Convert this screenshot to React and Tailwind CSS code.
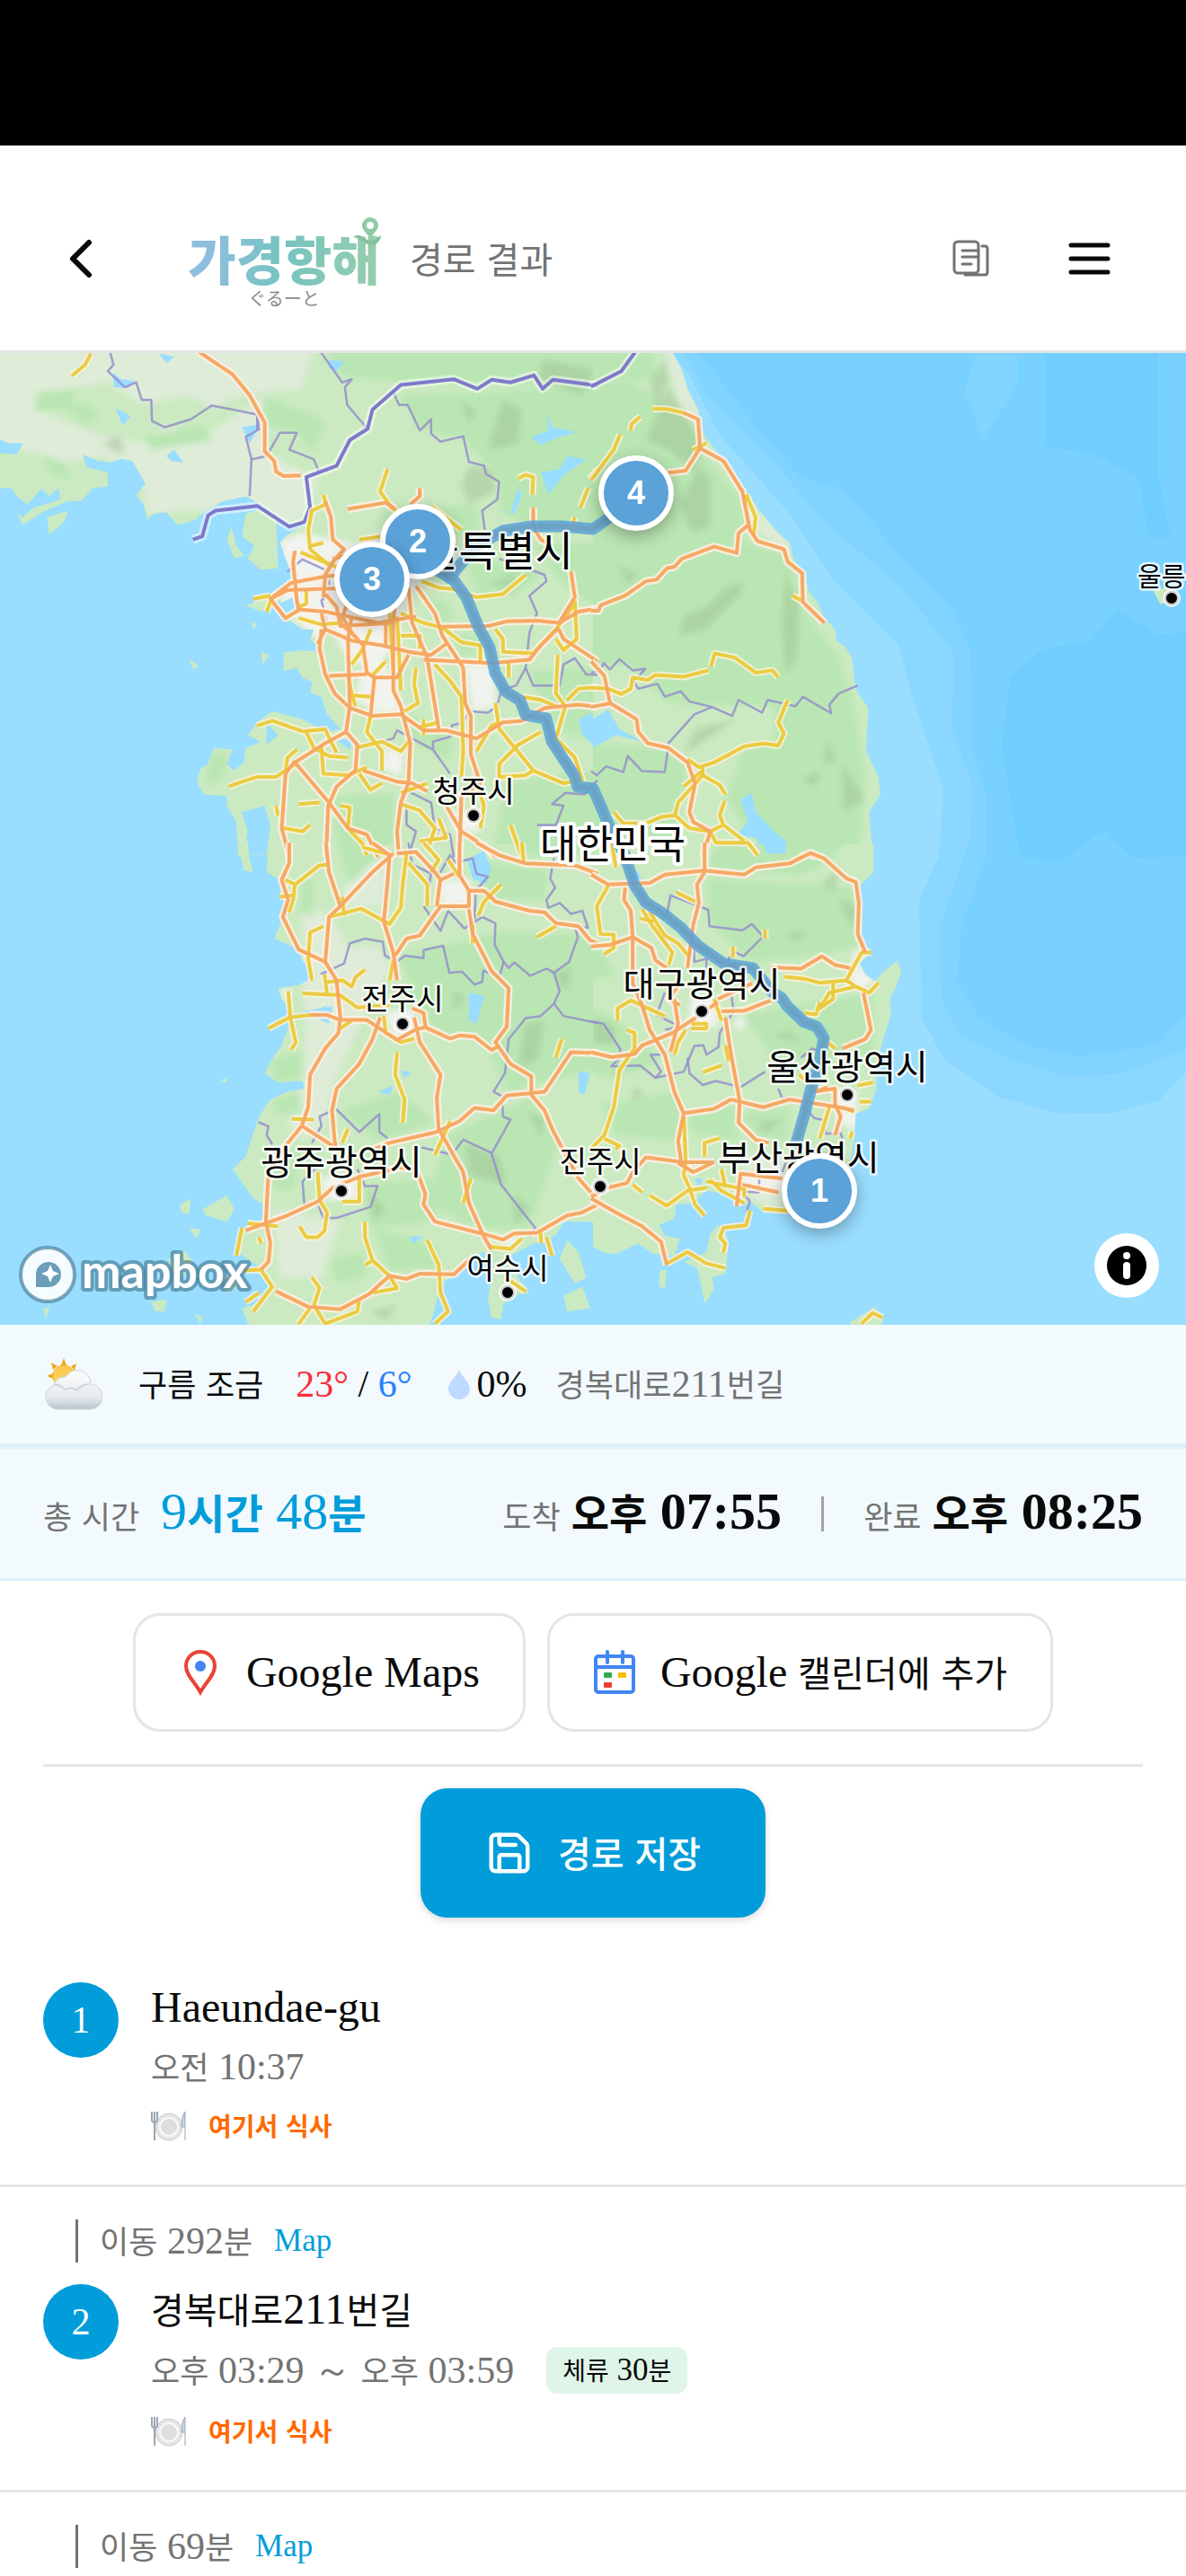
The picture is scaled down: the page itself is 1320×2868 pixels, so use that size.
import { clsx } from 'clsx';

const HANGUL = /([\u1100-\u11ff\uac00-\ud7a3]+)/;

const TEXT_SIZES = {
    sm: { hangul: 'text-[28px]', latin: 'text-[35px]' },
    md: { hangul: 'text-[35px]', latin: 'text-[42px]' },
    lg: { hangul: 'text-[40px]', latin: 'text-[48px]' },
    xl: { hangul: 'text-[46px]', latin: 'text-[58px]' }
};

// Hangul and latin runs use different faces, so each run gets its own optical size
function Text({ size = 'md', className, latinClassName, children }) {
    return (
        <span className={clsx("block whitespace-pre font-['Liberation_Serif',serif]", TEXT_SIZES[size].latin, className)}>
            {children.split(HANGUL).filter(Boolean).map((run, i) => (
                HANGUL.test(run)
                    ? <span key={i} className={clsx("font-['Noto_Sans_CJK_KR',sans-serif] leading-none", TEXT_SIZES[size].hangul)}>{run}</span>
                    : <span key={i} className={latinClassName}>{run}</span>
            ))}
        </span>
    );
}

// Map geometry is split in four quadrants, each on its own 1568 x 1568 grid
const QUADRANTS = [
    {
        id: 'nw',
        transform: 'translate(0 -3) scale(0.4209 0.3571)',
        land: [
            '-5,-5 -5,430 30,430 45,455 72,480 110,432 130,455 155,430 160,465 135,475 90,490 60,520 45,510 60,545 120,500 180,470 215,470 245,430 285,425 285,380 230,365 218,325 260,345 290,350 320,338 350,345 385,415 360,450 380,480 390,530 405,510 440,505 470,545 515,530 545,500 590,470 650,455 690,480 730,520 760,540 805,545 760,575 740,600 765,680 785,700 700,775 650,795 690,815 740,780 755,835 800,870 830,870 820,900 850,940 800,935 750,942 750,1000 785,990 800,1020 825,1035 820,1068 850,1080 865,1135 900,1180 860,1190 800,1150 720,1125 680,1160 655,1200 690,1220 650,1240 645,1285 620,1310 600,1290 615,1245 565,1240 550,1290 530,1305 520,1345 540,1385 600,1390 600,1420 625,1470 630,1575 1580,1580 1580,-5',
            '650,510 690,495 730,520 735,680 690,685 655,650 672,610 640,580',
            '612,550 625,610 645,640 620,650 600,590',
            '500,960 525,985 510,995', '690,940 712,950 695,980', '665,845 680,855 670,868', '125,520 180,500 170,535 130,575'
        ],
        urban: [
            '745,590 800,570 880,590 940,600 1010,560 1090,540 1200,600 1210,650 1130,690 1090,750 1060,830 1060,930 1010,960 1050,1060 1060,1130 1000,1130 940,1090 960,980 900,930 880,850 840,900 760,820 740,770 770,700 740,650',
            '1020,1240 1070,1250 1060,1330 1010,1300', '1190,1440 1270,1440 1270,1500 1200,1500', '1230,980 1310,980 1310,1110 1250,1130'
        ],
        pale: [
            '-60,-60 840,-60 800,120 640,140 560,180 500,140 380,170 280,100 150,130 90,180 250,260 390,290 430,240 560,250 700,140 700,320 840,400 820,490 760,550 690,480 540,500 390,510 380,430 280,330 180,350 -60,270'
        ],
        forest: [
            '840,-60 1660,-60 1660,140 1430,110 1260,110 1060,100 900,80', '1060,140 1660,110 1660,530 1420,560 1320,500 1320,400 1220,270 1110,250',
            '100,130 200,120 190,180 90,190', '170,180 225,160 265,210 225,230', '380,270 540,230 560,280 400,310', '700,140 860,220 830,320 780,250 690,230',
            '110,330 170,350 190,410 130,380', '1230,640 1440,690 1360,770 1260,760', '1180,880 1300,900 1230,960', '1400,600 1660,600 1660,780 1560,790 1500,740', '1400,1000 1660,980 1660,1220 1500,1200 1430,1100',
            '880,1390 1040,1380 1050,1640 900,1640', '1340,1350 1450,1330 1660,1300 1660,1640 1290,1640', '1070,1130 1200,1190 1190,1280 1090,1220', '560,1250 600,1260 590,1340 540,1360', '1010,500 1260,480 1270,580 1050,580', '1120,760 1180,780 1200,840 1160,850'
        ],
        shade: ['270,290 310,265 330,300 320,330', '1240,360 1300,370 1310,440 1240,480 1220,420', '1330,150 1380,190 1370,290 1290,310', '1220,160 1260,190 1240,230', '1290,730 1380,690 1350,740', '1440,30 1570,60 1540,140 1420,90'],
        water: [
            '-5,275 20,290 60,290 45,325 -5,320', '300,70 320,90 355,95 340,118 300,115', '420,10 462,20 440,40', '870,30 910,35 890,65 868,55',
            '305,180 345,205 325,235', '440,330 460,310 485,350 455,345', '640,240 690,230 660,290', '1405,270 1450,250 1445,190 1460,240 1525,255 1480,270 1430,295', '1430,380 1480,370 1500,330 1550,340 1490,390 1450,450', '1290,490 1350,505 1370,430 1380,450 1360,510',
            '890,1215 935,1210 925,1245', '1530,1150 1568,1130 1568,1230 1540,1200', '640,1440 700,1420 715,1480 705,1575 645,1575 655,1500', '740,790 775,770 790,820 760,830', '705,1160 735,1200 705,1230'
        ],
        orange: [
            '520,0 615,75 660,140 700,225 700,315 725,345 730,378 750,392 795,390', '920,495 1020,475 1045,495', '1110,430 1110,455 1085,480', '860,470 875,520 880,590 910,620 880,660 860,700 855,770', '780,625 775,660 785,780 790,810 755,835 715,775 770,725 860,705 900,700',
            '715,775 760,748 900,742 1000,700 1060,640', '790,808 860,815 920,830 1000,850 1100,830', '860,870 930,905 1010,920 1080,940 1140,950 1180,915', '850,870 845,930 860,1010 885,1070 925,1115 985,1140 1060,1135 1120,1185 1180,1185 1260,1210 1330,1160 1380,1155 1440,1115 1530,1105 1580,1112',
            '840,915 860,870 850,820', '905,830 930,880 960,920 970,1005 990,1020 980,1140', '930,830 920,900 925,1110 915,1190 860,1225 780,1285 870,1410 920,1490 970,1510 1000,1580', '780,1280 755,1320 745,1490 765,1580', '915,1190 945,1230 940,1310 890,1360 868,1420 862,1580',
            '870,1015 925,1012 970,1010', '990,1020 1050,1020 1080,950', '1040,830 1040,1060 1060,1110 1085,1225 1080,1350 1060,1410 1050,1500 1055,1580', '1080,740 1090,850 1130,960 1160,1180', '1100,735 1150,820 1170,890 1225,990 1230,1100 1245,1140 1245,1260 1270,1350 1220,1390 1215,1580',
            '1160,862 1290,860 1340,845 1420,843 1478,850 1520,770 1510,690', '1478,850 1530,815 1580,805', '1478,865 1430,920 1400,965 1300,975 1120,965', '1478,870 1490,900 1580,970', '1410,490 1410,550 1430,590 1460,610', '960,1310 1050,1345 1090,1350 1130,1375', '1180,1420 1220,1500 1280,1545 1310,1580', '880,650 915,640 930,750 900,850 945,900', '860,760 890,800 900,860 1040,850 1045,780', '1020,850 1020,920'
        ],
        yellow: [
            '240,10 225,45 190,80', '1025,370 1005,440 1035,490 1060,510', '855,450 862,480 825,500 815,560 820,620 870,670', '795,630 900,680', '820,610 855,600', '950,590 1010,580', '1140,485 1220,560', '1370,400 1390,388 1410,395 1408,450', '1580,370 1560,400', '1555,430 1535,490', '1520,520 1510,560', '670,775 715,765', '705,815 720,770', '810,745 810,790 790,800', '790,835 850,855 900,850',
            '1115,720 1160,740 1200,745 1260,770 1330,760 1390,700', '1060,820 1120,850 1170,865 1220,910 1270,920 1270,975', '1310,870 1330,900 1330,940 1410,945 1470,870 1520,790', '1520,780 1525,900 1490,935 1470,900', '1060,890 1110,890 1110,930', '980,870 960,930 930,980', '1020,970 980,1020', '1100,990 1095,1040 1105,1100 1070,1125', '1150,980 1190,1030 1220,1080 1225,1250 1220,1330',
            '920,1010 930,1070 940,1110', '925,1075 980,1080', '680,1170 720,1155 800,1188 860,1182 890,1255', '810,1190 830,1240 870,1265 920,1270', '850,1230 855,1320 920,1325 970,1300', '980,1140 970,1190 1010,1250 1010,1310', '940,1240 1010,1220 1060,1250 1080,1220', '605,1360 640,1345 680,1330 730,1330 780,1290', '755,1310 760,1270 785,1245', '950,1320 980,1370 1010,1350', '1345,975 1345,1020', '1475,950 1470,1070 1495,1110 1470,1210 1520,1270 1540,1340 1490,1350 1410,1310 1320,1180 1310,1100', '1380,1080 1430,1090 1470,1110', '1500,1090 1530,1055 1580,1050',
            '1430,1190 1370,1230 1320,1290 1320,1330 1390,1325 1410,1310', '1260,1250 1300,1170 1320,1160', '1120,1150 1120,1200', '1110,1175 1160,1160', '1260,1350 1280,1420 1270,1490', '750,1490 800,1500 820,1480', '790,1415 845,1410', '730,1420 735,1450', '1060,1415 1110,1435 1150,1490 1130,1560', '900,1420 925,1425 920,1490 960,1540 970,1575', '1350,1480 1380,1580', '1060,1380 1130,1350', '1160,1460 1180,1520 1110,1530', '1050,830 1060,1060', '1030,820 1040,1000'
        ],
        border: ['290,0 300,45 285,65 330,115 360,100 375,155 400,155 402,220 435,240 505,215 560,172 680,200 680,250 650,270 665,340 660,455', '665,340 705,330 740,257 785,257 765,310 830,340 845,385', '680,200 685,250', '845,0 905,100 930,90 912,115 918,170 972,245', '1040,130 1055,170 1078,170 1110,250 1140,215 1140,260 1165,285 1225,268 1240,348 1280,360 1285,385 1320,410 1315,465 1275,500 1282,560', '1320,650 1440,700 1445,720 1400,765 1420,820 1400,880 1390,990 1410,1045 1480,1045 1490,980 1520,960 1550,1010 1580,1012', '1390,990 1365,1045 1325,1060 1315,1110 1290,1130 1240,1125 1225,1160 1195,1170 1190,1205 1145,1220 1145,1245 1190,1320', '935,1245 1040,1210 1050,1185 1145,1245', '760,690 800,652 870,690 870,760 850,780 865,850', '1060,1390 1080,1375 1140,1410 1150,1490 1190,1510 1200,1580', '1060,1390 1075,1420 1075,1480 1100,1500 1080,1580', '1580,1340 1545,1385 1495,1380 1460,1415 1490,1420 1470,1480 1420,1480'],
        frontier: ['510,590 535,580 550,515 570,500 680,485 765,550 805,535 820,490 810,395 890,360 925,280 972,245 985,185 1060,108 1200,90 1262,120 1300,92 1350,100 1412,78 1435,120 1462,92 1580,110']
    },
    {
        id: 'ne',
        transform: 'translate(660 -3) scale(0.4209 0.3571)',
        land: ['0,-5 205,-5 235,60 250,120 280,190 285,250 330,320 365,380 400,430 440,500 490,570 520,600 530,650 560,700 570,750 595,790 610,830 640,870 645,905 670,930 685,960 695,1060 728,1115 722,1250 755,1330 760,1385 730,1440 740,1580 0,1580', '1480,745 1520,740 1530,780 1500,792'],
        urban: [],
        pale: ['180,-60 205,-60 280,190 260,220 220,150', '440,500 525,610 520,640 480,600 430,560'],
        forest: ['-80,110 100,100 240,200 290,320 400,480 400,600 520,640 550,800 650,960 690,1100 720,1330 700,1640 500,1640 350,1400 400,1240 480,1220 480,1110 200,1100 90,980 -80,980', '-80,1220 180,1240 250,1300 200,1640 -80,1640', '-80,-60 150,-60 170,90 -80,110'],
        shade: ['200,110 290,280 270,380 200,310 140,280', '150,100 190,30 200,90 170,190', '280,360 310,400 310,550 260,570 230,480', '510,690 545,800 540,960 510,1010 500,860', '240,830 300,800 350,740 400,720 390,760 300,870 230,890', '270,1180 380,1150 330,1190 240,1260', '550,1340 600,1310 590,1360', '660,1290 720,1400 660,1440', '620,1200 640,1280 610,1290', '70,670 120,700 90,730'],
        water: ['0,1150 40,1120 70,1180 130,1220 60,1200 0,1240', '390,1400 420,1380 430,1440 480,1500 510,1530 510,1575 450,1570 430,1520 380,1510 410,1470'],
        orange: ['240,195 278,215 283,305 345,345 395,440 415,560 435,595 505,620 515,660 553,695 555,785 612,850', '283,305 245,375 195,382', '-5,812 15,812 20,795 85,765 140,720 168,715 195,680 215,675 235,650 320,612 380,632 385,570 410,545', '-5,970 30,1015 45,1100 115,1150 120,1190 145,1225 200,1240 250,1285 270,1350 255,1440 265,1470 310,1500 290,1580', '-5,1112 50,1100', '550,1580 570,1570 590,1580'],
        yellow: ['158,183 195,183 240,195', '100,250 102,230 125,207', '72,262 55,310 -5,405', '265,310 300,290', '405,450 430,520 425,575', '400,480 410,450', '528,765 550,780', '-5,1052 40,1055 75,1072 100,1055 105,1020 145,1028 165,1012 240,1018 305,998', '312,985 322,945 375,958 430,1005 475,998 490,1020', '515,1090 490,1160 505,1195 490,1232 450,1226 400,1235 320,1285 280,1300 250,1275', '290,1300 290,1325 335,1355 350,1385', '290,1325 225,1410 217,1450 180,1455 140,1475 80,1475 55,1440', '217,1450 255,1490 310,1500 325,1535 410,1535 435,1570', '348,1405 335,1450 345,1480 400,1530', '345,1480 310,1500', '240,1360 290,1310'],
        border: ['-5,1005 18,1000 28,975 45,995 70,963 105,998 138,993 108,1035 120,1055 170,1040 190,1080 232,1063 255,1095 315,1112 368,1140 385,1090 447,1130 462,1090 535,1110 555,1080 630,1132 625,1105 650,1070 700,1045', '315,1112 268,1135 200,1225 190,1315 130,1312 92,1265 80,1315 35,1297 10,1325 -5,1312'],
        frontier: ['-5,113 75,65 118,-5']
    },
    {
        id: 'sw',
        transform: 'translate(0 547) scale(0.4209 0.3444)',
        land: [
            '710,0 705,90 745,120 740,165 765,185 750,230 725,305 755,320 790,340 800,375 830,430 790,455 735,465 745,500 770,540 760,600 745,650 720,695 700,740 735,770 800,765 805,790 760,800 715,825 685,880 665,950 650,1010 615,1050 650,1110 670,1145 700,1165 695,1225 640,1240 630,1320 690,1370 720,1440 690,1480 640,1500 665,1580 1130,1580 1150,1500 1165,1420 1200,1395 1240,1345 1280,1315 1300,1400 1290,1470 1300,1530 1325,1535 1330,1490 1345,1460 1400,1450 1370,1400 1350,1330 1420,1285 1470,1265 1490,1220 1580,1220 1580,0',
            '628,-10 655,-10 660,50 670,90 645,85', '475,1165 505,1145 500,1195 480,1190', '535,1180 600,1135 620,1180 600,1220 545,1200', '500,1240 530,1245 520,1275', '445,1340 490,1315 510,1350 480,1400 450,1380', '400,1480 440,1470 435,1510 410,1510', '515,1520 535,1525 530,1550', '585,765 600,755 598,770', '1500,1280 1530,1320 1550,1400 1520,1420 1480,1340', '1490,1460 1540,1430 1560,1500 1500,1510', '115,1500 132,1498 120,1535', '590,1400 625,1380 630,1430 600,1450'
        ],
        urban: ['1160,120 1240,110 1250,190 1170,200', '1020,540 1090,530 1110,600 1040,630', '850,1080 940,1060 950,1150 860,1150', '740,465 770,465 760,520', '1300,1270 1370,1270 1360,1310'],
        pale: ['800,180 880,240 920,330 1000,330 1030,400 960,560 880,780 860,900 800,960 760,900 800,780 810,560 800,440', '930,20 1030,40 1010,200 900,200', '720,1180 900,1220 850,1400 740,1400'],
        forest: ['800,110 830,120 830,230 790,220', '880,-60 1020,-60 1010,30 920,130', '1290,-60 1660,-60 1660,30 1400,40', '1060,360 1330,280 1660,300 1660,700 1340,800 1280,640 1180,620 1100,540', '1270,60 1450,80 1440,180 1290,180', '900,860 1060,800 1150,900 1000,960', '1180,940 1400,820 1480,960 1400,1240 1260,1240 1130,1160', '960,1100 1140,1080 1160,1220 980,1240', '990,1240 1160,1300 1160,1370 1030,1380', '710,700 800,670 800,760 730,765', '720,830 790,800 800,870 730,870', '870,1340 960,1320 970,1400 890,1420', '700,1010 790,990 780,1110 720,1120'],
        shade: ['1390,580 1440,570 1420,700 1370,720', '1230,970 1320,1010 1340,1100 1240,1070', '1460,420 1510,400 1500,480', '1400,870 1440,880 1430,950', '970,1120 1020,1180 990,1220', '980,1510 1050,1490 1020,1540', '1200,470 1230,500 1200,540', '1360,1130 1400,1180 1360,1230'],
        water: ['1235,50 1280,20 1300,80 1285,130 1250,110', '1240,480 1280,490 1260,580 1240,570', '1000,800 1040,780 1030,810', '1060,730 1090,740 1070,755', '1530,735 1560,740 1545,810 1530,800', '1080,1270 1120,1265 1095,1290', '870,520 820,540 770,550 775,570 830,560', '800,540 880,525 870,580'],
        orange: [
            '765,-5 765,60 745,115 762,180 748,235 790,340 860,380 890,440 900,560 895,610 860,660 820,745 815,850 798,910 755,975 710,1060 703,1220 715,1290 710,1350 690,1375', '862,-5 870,90 900,200 870,235 860,380', '1040,30 985,90 900,200', '985,-5 1030,35 1025,120 1015,250 1040,350 1050,440', '1050,30 1100,25 1150,90 1165,115 1200,95', '1215,-5 1215,100 1240,150 1240,200 1165,200 1130,260 1110,295 1075,305 1045,360', '1165,110 1155,200', '1240,150 1280,150 1310,185 1400,215 1440,220 1470,255 1530,265 1560,310 1580,320', '1240,210 1250,290 1300,410 1345,465 1340,590 1310,640 1350,710 1405,750 1405,810 1440,860 1460,920 1490,990 1530,1080 1580,1150', '820,552 865,552 900,568 970,568 1050,632 1100,598 1125,592 1190,628 1215,618 1255,622 1300,665 1315,655', '1005,560 985,630 950,710 890,790 878,860 885,960 890,990', '1090,530 1120,545 1125,590', '1095,560 1110,640 1165,745 1155,820 1160,920 1225,1060 1240,1160 1280,1270', '1580,675 1510,672 1440,800 1340,812 1305,860 1255,852 1215,895 1155,930 1030,965 990,985', '798,910 880,975', '650,1248 760,1200 840,1155 880,1110 950,1075 1060,1045 1100,1050 1125,1130 1120,1165 1150,1220 1280,1260 1330,1278 1360,1258 1420,1256 1500,1200 1540,1190 1580,1165', '730,1445 815,1495 900,1503 975,1455 1030,1395 1075,1405 1110,1388 1200,1390 1240,1345', '1260,-5 1320,35 1390,62 1520,68 1580,95', '1280,1270 1300,1310'
        ],
        yellow: ['870,65 845,68 780,130 755,115', '780,130 775,180 765,220', '740,170 775,165', '870,235 955,208 1030,258 1060,205 1065,130 1075,30', '905,170 910,230', '855,265 820,285 815,370 825,440', '965,405 940,430 930,460 905,440 865,445', '858,420 865,485', '800,482 900,488 945,528 1030,520', '710,595 765,560 820,552', '762,475 768,560 782,640 770,665', '1030,440 1040,375', '1015,555 1020,610 1060,640 1095,628', '1050,672 1045,745 1070,825 1065,900', '895,600 930,570', '772,888 830,890', '920,920 905,965', '1190,895 1150,1005', '1245,1080 1225,1160', '840,1060 845,1150 865,1190 858,1250 840,1270 810,1270 792,1235', '950,1080 950,1155 905,1155', '655,1225 735,1235', '625,1330 640,1240', '690,1290 685,1270', '690,1375 720,1430 670,1510', '690,1375 640,1378', '685,1450 650,1480', '825,1400 845,1435 830,1490 860,1550 945,1510 950,1470', '820,1500 790,1550', '965,1220 965,1270 985,1345 1030,1395 1050,1435 985,1450', '985,1345 965,1360', '1130,1280 1160,1360 1165,1450 1185,1510 1150,1550', '1290,1300 1350,1308 1380,1275', '1335,1400 1390,1445', '1430,1255 1430,1290', '1445,1270 1460,1330', '1485,630 1470,690', '1420,300 1470,265', '1380,-5 1385,55', '1325,130 1280,185 1265,230', '1080,60 1130,130 1130,200', '960,10 1035,35', '1120,-5 1160,50 1140,90', '1185,50 1215,105', '1250,260 1250,320'],
        border: ['848,420 910,385 925,320 965,305 1012,315 1018,360 1050,380 1070,360 1120,368 1120,342 1172,328 1188,415 1222,412 1255,453 1275,445 1278,408 1320,430 1332,380', '1332,380 1345,400 1360,382 1402,425 1445,402 1465,415 1505,380 1528,300 1520,265 1555,270 1540,215 1510,225 1480,190 1450,205 1445,180 1468,140 1455,110 1465,45', '1465,415 1480,475 1465,515 1430,555 1390,562 1345,630 1335,740 1305,800 1328,815 1330,880 1350,890 1300,1000 1325,1100 1415,1240 1400,1270', '1465,515 1490,555 1580,578', '1275,235 1310,255 1308,325 1332,380', '1120,200 1165,280 1185,215 1228,272 1275,235', '1080,-5 1090,65 1140,95 1125,200', '1140,95 1165,90 1190,35 1205,60 1250,45 1260,95 1290,105 1258,150 1255,245', '683,898 710,912 705,940 720,970', '825,965 850,910 845,880 888,855 950,930 1003,872 1003,930 1025,950', '1115,980 1195,1003 1225,955 1300,998', '840,1040 800,1090 805,1165 840,1160 855,1208 890,1208 980,1172 998,1105 965,1105 945,1050'],
        frontier: []
    },
    {
        id: 'se',
        transform: 'translate(660 547) scale(0.4209 0.3444)',
        land: ['0,0 742,0 742,90 700,140 712,230 705,330 735,350 705,385 720,420 745,442 770,410 805,376 815,410 805,450 785,500 788,550 765,640 750,720 750,790 730,855 695,870 690,960 680,1020 640,1080 590,1150 520,1195 450,1190 420,1160 390,1165 350,1130 300,1120 260,1160 220,1165 215,1210 175,1230 190,1265 230,1275 215,1330 160,1325 120,1290 60,1325 30,1320 0,1300', '330,1230 355,1265 355,1330 350,1390 315,1400 320,1440 295,1485 285,1420 275,1370 240,1350 300,1320 310,1260', '175,1380 195,1375 190,1435 175,1430', '680,1545 745,1495 768,1530 760,1580 685,1580'],
        urban: ['690,340 730,350 700,390 745,440 700,480 680,430', '380,560 400,560 400,600 370,590', '390,1070 500,1060 510,1110 400,1120', '640,790 700,800 700,930 650,900', '260,490 330,490 330,590 250,590'],
        pale: ['380,1000 520,1000 500,1180 420,1150'],
        forest: ['-80,-60 60,-60 60,30 -80,30', '-80,300 10,320 60,420 -80,470', '300,110 690,140 700,330 600,360 420,380 310,260', '400,550 740,480 740,680 480,700', '20,840 230,800 230,960 60,940', '390,870 520,850 510,960 430,940', '-80,500 60,560 180,700 60,760 -80,720', '250,880 380,840 380,960 260,930', '350,-60 700,-60 620,60 550,100 300,80'],
        shade: ['520,280 570,290 530,320', '650,180 700,200 690,280', '600,130 650,80 640,150', '0,560 60,590 50,650 0,640', '440,900 500,890 450,940', '100,790 140,800 110,830', '480,620 520,600 540,640'],
        water: ['450,-5 510,-5 510,30 460,30', '90,80 120,90 130,120 100,110', '270,1080 290,1080 280,1120'],
        orange: ['-5,98 40,130 150,125 190,98 295,85 400,98 430,75 520,62 575,28 610,45 670,110 695,122 703,190 700,290 720,350', '295,-5 295,90 275,130 280,190 265,260 250,400', '85,140 82,180 100,215 105,300 105,450 130,520 150,600 190,680 215,800 240,870 225,960 235,1040', '-5,330 45,325 105,300 155,335 165,375 195,400', '-5,672 50,688 110,678 130,650 210,610 260,570 330,510', '340,540 400,538 470,505', '350,560 365,680 388,830 385,900 430,955 465,965', '470,398 550,402 605,362 640,390 680,400', '715,480 735,600 720,630 660,660', '235,870 320,855 365,825 450,850 520,825 650,850 690,860', '580,800 640,790 640,840 655,880 640,940', '215,500 225,580 205,670', '-5,1140 40,1110 90,1095 105,1060 140,1012 240,1028 320,1028', '-5,1145 60,1190 130,1235 180,1285 195,1360', '380,1170 390,1065 500,1080', '395,1100 490,1125', '225,1030 265,1060 320,1028', '230,450 200,500 230,520', '330,500 420,450', '590,800 620,785'],
        yellow: ['40,135 10,200 20,290 55,292 55,335 30,355', '130,210 155,260 210,350 200,390', '150,220 190,295 225,320 255,365', '125,240 160,250', '220,155 270,185', '455,275 455,305', '370,330 370,365', '735,350 710,350 670,440 695,460 730,480 755,448', '505,428 560,435 600,448 670,440', '635,440 635,500 600,530 625,480 695,460', '600,510 590,550 560,545', '65,570 65,530 100,505 190,555', '90,600 110,610 110,660 70,730 55,850 30,940 -5,985', '245,600 225,640 215,680', '350,650 358,700', '290,737 340,715', '335,950 295,965 295,1010', '240,880 245,1020 240,1070 255,1110 270,1165 295,1200', '30,952 70,975 60,985', '300,1090 400,1115 400,1140', '310,1085 340,1120 400,1160', '340,1050 350,1110', '150,1135 195,1168 250,1120 300,1110', '105,1100 130,1125', '450,1178 515,1185', '415,1185 405,1232 345,1240 335,1270 350,1290 345,1320', '195,1355 250,1318 300,1355 350,1370', '260,580 300,580 300,595 260,595', '320,500 340,570', '600,950 625,850', '660,850 690,865', '700,780 740,770', '705,832 735,832', '685,930 680,950', '710,1550 740,1515 765,1530', '410,-5 435,35', '50,-5 60,75', '620,640 640,660', '545,745 600,800'],
        border: ['195,230 205,165 305,212 308,265 395,278 420,258 450,298 398,362 370,345 355,380', '265,280 268,380 300,370 300,420', '-5,572 28,580 72,662 72,690 48,718 125,715 165,755 180,735 152,680 190,680 170,635 222,585 168,552 190,480', '190,600 225,590', '365,480 372,540 335,610 332,655 300,680 292,650 268,652 240,735 165,755', '250,690 255,740 290,778 325,765 390,785 455,735', '490,790 500,820 540,822 585,885 612,892 615,935 655,935 660,950', '510,1030 500,1060', '470,1078 440,1080 438,1125 395,1122 415,1155 405,1190', '550,690 580,660 620,680'],
        frontier: []
    }
];

const ROUTES = [
    '487,242 505,253 519,272 532,304 545,328 551,356 563,377 579,387 585,403 608,407 614,432 627,452 639,470 643,483 660,485 668,503 681,534 695,558 706,592 719,612 738,624 758,640 777,660 806,680 838,685 860,712 870,718 876,727 895,745 909,750 917,763 912,790 903,818 896,845 886,880',
    '500,250 530,215 560,198 592,193 626,193 660,196 680,182 708,165'
];

const LABELS = [
    { name: '서울특별시', x: 532, y: 237, size: 46 },
    { name: '청주시', x: 527, y: 500, size: 33, dot: [527, 515] },
    { name: '대한민국', x: 682, y: 563, size: 44, halo: true },
    { name: '전주시', x: 448, y: 731, size: 33, dot: [448, 747] },
    { name: '광주광역시', x: 380, y: 915, size: 39, dot: [380, 933] },
    { name: '여수시', x: 565, y: 1031, size: 33, dot: [565, 1046] },
    { name: '진주시', x: 668, y: 912, size: 33, dot: [668, 928] },
    { name: '대구광역시', x: 781, y: 716, size: 38, dot: [781, 733] },
    { name: '울산광역시', x: 943, y: 809, size: 39, dot: [943, 826] },
    { name: '부산광역시', x: 889, y: 910, size: 39 },
    { name: '울릉군', x: 1306, y: 260, size: 29, dot: [1304, 273] }
];

const MARKERS = [
    { id: 4, x: 708, y: 156 },
    { id: 2, x: 465, y: 210 },
    { id: 3, x: 414, y: 252 },
    { id: 1, x: 912, y: 933 }
];

const STOPS = [
    { id: 1, name: 'Haeundae-gu', time: '오전 10:37', meal: true },
    { id: 2, name: '경복대로211번길', time: '오후 03:29 ～ 오후 03:59', stay: '체류 30분', meal: true, travel: '이동 292분' },
    { id: 3, travel: '이동 69분' }
];

function Shapes({ points, className }) {
    return points.map((p, i) => <polygon key={i} points={p} className={className} />);
}

function Lines({ points, className }) {
    return points.map((p, i) => (
        <polyline key={i} points={p} vectorEffect="non-scaling-stroke" className={className} />
    ));
}

function MapCanvas() {
    return (
        <svg viewBox="0 0 1320 1082" preserveAspectRatio="xMidYMid slice" className="block h-full w-full" aria-hidden="true">
            <defs>
                <filter id="soften" x="-20%" y="-20%" width="140%" height="140%">
                    <feGaussianBlur stdDeviation="9" />
                </filter>
                {QUADRANTS.map(q => (
                    <clipPath key={q.id} id={`land-${q.id}`}>
                        {q.land.map((p, i) => <polygon key={i} points={p} />)}
                    </clipPath>
                ))}
            </defs>
            <rect width="1320" height="1082" className="fill-[#99ddff]" />
            <path d="M745 0H1320V800L1290 832L1240 846L1180 847L1110 828L1050 785L1026 740L1023 610L1045 560L1050 485L1015 380L1000 325L930 255L880 180L800 90L765 20Z" className="fill-[#8ad7ff]" />
            <path d="M762 0H1320V775L1250 802L1190 806L1120 785L1070 760L1048 720L1046 640L1080 540L1082 480L1060 420L1062 335L1005 262L920 190L860 120L790 50Z" className="fill-[#80d4ff]" />
            <path d="M778 0H1320V735L1290 770L1200 783L1140 770L1090 740L1065 700L1070 640L1098 560V490L1082 440L1080 330L1060 285L1000 225L960 175L935 150L890 138L840 80Z" className="fill-[#78d1ff]" />
            <path d="M1163 0H1288V130L1302 205H1278L1268 140L1240 125L1218 112L1163 104Z" className="fill-[#70ceff]" />
            <path d="M1320 310L1290 314L1243 286L1215 320L1160 330L1125 360L1115 440L1135 560L1180 567L1230 530L1260 562L1320 560Z" className="fill-[#70ceff]" />
            <path d="M1086 0H1132V35L1095 95L1073 45Z" className="fill-[#82d5ff]" />
            {QUADRANTS.map(q => (
                <g key={q.id} transform={q.transform}>
                    <Shapes points={q.land} className="fill-[#cbeac1]" />
                    <g clipPath={`url(#land-${q.id})`}>
                        <g filter="url(#soften)">
                            <Shapes points={q.pale} className="fill-[#deecd8]" />
                            <Shapes points={q.forest} className="fill-[#bae6b3]" />
                            <Shapes points={q.shade} className="fill-[#96b98a]/40" />
                            <Shapes points={q.urban} className="fill-[#f1f3ef]" />
                        </g>
                        <Shapes points={q.water} className="fill-[#99ddff]" />
                    </g>
                </g>
            ))}
            {QUADRANTS.map(q => (
                <g key={q.id} transform={q.transform} fill="none" strokeLinecap="butt" strokeLinejoin="round">
                    <Lines points={q.border} className="stroke-[#958fca]/85 stroke-[2.5px]" />
                    <Lines points={q.frontier} className="stroke-white/50 stroke-[10px]" />
                    <Lines points={q.frontier} className="stroke-[#7f79ca] stroke-[4px]" />
                    <Lines points={q.yellow} className="stroke-[#fbf3e0]/80 stroke-[8px]" />
                    <Lines points={q.orange} className="stroke-[#fdf0e4]/85 stroke-[9px]" />
                    <Lines points={q.yellow} className="stroke-[#ebcc40] stroke-[4px]" />
                    <Lines points={q.orange} className="stroke-[#f6a964] stroke-[4px]" />
                </g>
            ))}
            <g fill="none" strokeLinecap="round" strokeLinejoin="round">
                {ROUTES.map(points => (
                    <polyline key={points} points={points} className="stroke-[#5aa2d8]/85 stroke-[13px]" />
                ))}
                {ROUTES.map(points => (
                    <polyline key={points} points={points} className="stroke-[#6c9cbb]/60 stroke-[6px]" />
                ))}
            </g>
            {LABELS.map(({ name, x, y, size, dot, halo }) => (
                <g key={name}>
                    {dot && <circle cx={dot[0]} cy={dot[1]} r="8" className="fill-black stroke-white/80 stroke-[4px]" />}
                    <text
                        x={x}
                        y={y}
                        textAnchor="middle"
                        fontSize={size}
                        strokeLinejoin="round"
                        paintOrder="stroke"
                        className={clsx(
                            "fill-black font-['Noto_Sans_CJK_KR',sans-serif]",
                            halo ? 'stroke-white stroke-[8px]' : 'stroke-white/80 stroke-[5px]'
                        )}
                    >
                        {name}
                    </text>
                </g>
            ))}
        </svg>
    );
}

function RouteMap() {
    return (
        <section className="relative h-[1082px] overflow-hidden bg-[#99ddff]" aria-label="지도">
            <MapCanvas />
            {MARKERS.map(({ id, x, y }) => (
                <button
                    key={id}
                    type="button"
                    style={{ left: `${(x / 1320) * 100}%`, top: `${y}px` }}
                    className="absolute flex size-[84px] -translate-x-1/2 -translate-y-1/2 items-center justify-center rounded-full border-6 border-white bg-[#5aa2d8] font-['Liberation_Sans',sans-serif] text-[36px] font-bold text-white shadow-[0_6px_18px_rgba(0,0,0,0.3)]"
                >
                    {id}
                </button>
            ))}
            <a href="#mapbox" className="absolute bottom-[20px] left-[20px] flex items-center">
                <svg viewBox="0 0 66 66" className="size-[66px]" aria-hidden="true">
                    <circle cx="33" cy="33" r="30" className="fill-white/90 stroke-[#4d819b]/70 stroke-[4px]" />
                    <path d="M20 47V32a14 14 0 1 1 14 15Z" className="fill-[#6b9fb8]" />
                    <path d="M36 22l3 7 7 3-7 3-3 7-3-7-7-3 7-3Z" className="fill-white" />
                </svg>
                <svg viewBox="0 0 210 72" className="h-[72px] w-[210px]">
                    <text
                        x="5"
                        y="51"
                        paintOrder="stroke"
                        strokeLinejoin="round"
                        className="fill-white stroke-[#4d819b]/70 stroke-[8px] font-['Lato',sans-serif] text-[52px] font-bold"
                    >
                        mapbox
                    </text>
                </svg>
            </a>
            <button
                type="button"
                aria-label="지도 정보"
                className="absolute right-[30px] bottom-[30px] flex size-[72px] items-center justify-center rounded-full bg-white"
            >
                <svg viewBox="0 0 44 44" className="size-[44px]">
                    <circle cx="22" cy="22" r="22" />
                    <circle cx="22" cy="11" r="4" className="fill-white" />
                    <rect x="18" y="18" width="8" height="19" rx="4" className="fill-white" />
                </svg>
            </button>
        </section>
    );
}

function Logo() {
    return (
        <a href="#home" className="relative ml-11 flex w-[216px] flex-col items-center pt-[22px]">
            <span className="bg-linear-to-r from-[#92bde3] via-[#76c3c1] to-[#97ceaa] bg-clip-text font-['Noto_Sans_CJK_KR',sans-serif] text-[58px] leading-[66px] font-black text-transparent">
                가경항해
            </span>
            <span className="font-['Noto_Sans_CJK_JP',sans-serif] text-[20px] leading-[24px] text-[#8a8a8a]">ぐるーと</span>
            <svg viewBox="0 0 34 36" className="absolute top-[10px] right-0 h-[36px] w-[34px]" aria-hidden="true">
                <path fillRule="evenodd" d="M22 0a9 9 0 0 1 9 9c0 4-4 8-9 14-5-6-9-10-9-14A9 9 0 0 1 22 0Zm0 5a4 4 0 1 0 0 8 4 4 0 0 0 0-8Z" className="fill-[#8fcaa5]" />
                <path d="M3 22c6-4 10-1 14 2 5 3 9 3 12-1l-1-2 3 1 3-2c0 6-5 11-11 11S10 22 3 22Z" className="fill-[#84c19d]" />
            </svg>
        </a>
    );
}

function Header() {
    return (
        <header className="flex items-center border-b-3 border-[#e5e5e5] bg-white px-12 pt-[60px] pb-9">
            <button type="button" aria-label="뒤로" className="flex h-[132px] w-[84px] items-center justify-center">
                <svg viewBox="0 0 24 24" className="size-[72px] fill-none stroke-[#0a0a0a] stroke-2" strokeLinecap="round" strokeLinejoin="round">
                    <path d="m15 18-6-6 6-6" />
                </svg>
            </button>
            <div className="w-8" />
            <Logo />
            <h1 className="ml-8 leading-[60px] text-[#737373]"><Text size="lg">경로 결과</Text></h1>
            <div className="ml-auto flex items-center gap-[60px] pr-6">
                <button type="button" aria-label="저장된 경로" className="flex size-[72px] items-center justify-center">
                    <svg viewBox="0 0 42 42" className="size-[42px] fill-none stroke-[#737373] stroke-3" strokeLinecap="round" strokeLinejoin="round">
                        <rect x="3" y="2" width="27" height="35" rx="4" />
                        <path d="M12 12h17M12 19h17M12 27h10M34 7h3q3 0 3 3v26q0 3-3 3H15" />
                    </svg>
                </button>
                <button type="button" aria-label="메뉴" className="flex size-[72px] items-center justify-center">
                    <svg viewBox="0 0 48 48" className="size-[48px] fill-none stroke-[#0a0a0a] stroke-5" strokeLinecap="round">
                        <path d="M4 9h41M4 24h41M4 39h41" />
                    </svg>
                </button>
            </div>
        </header>
    );
}

function PartlyCloudy() {
    return (
        <svg viewBox="0 0 66 58" className="h-[58px] w-[66px]" aria-hidden="true">
            <defs>
                <linearGradient id="sun" x1="0" y1="0" x2="0" y2="1">
                    <stop offset="0" stopColor="#fbc748" />
                    <stop offset="1" stopColor="#fddb6a" />
                </linearGradient>
                <linearGradient id="cloud" x1="0" y1="0" x2="0" y2="1">
                    <stop offset="0.2" stopColor="#f7f8fa" />
                    <stop offset="0.7" stopColor="#e6e9ee" />
                    <stop offset="1" stopColor="#b9c2cd" />
                </linearGradient>
            </defs>
            <path d="M23 0l3 8h-6ZM9 5l7 4-5 4ZM37 6l-2 8-4-5ZM4 20l7-3v6Z" className="fill-[#f0a91f]" />
            <circle cx="23" cy="20" r="12" fill="url(#sun)" className="stroke-[#f3b02c] stroke-1" />
            <path d="M15 57a14 14 0 0 1-3-27 12 12 0 0 1 13-9A15 15 0 0 1 53 29a14 14 0 0 1-2 28Z" fill="url(#cloud)" className="stroke-[#cdd4dc] stroke-1" />
            <path d="M23 36q8-5 14 0 5-6 14-7M12 30q7-1 11 4" fill="none" className="stroke-[#cfd5dd] stroke-2" />
        </svg>
    );
}

function WeatherBar() {
    return (
        <section className="flex h-[135px] items-center border-b-3 border-[#dbf1f9] bg-[#f2fafd] px-12 leading-[54px] text-[#0a0a0a]">
            <PartlyCloudy />
            <Text className="ml-10">구름 조금</Text>
            <p className="ml-9 flex">
                <Text className="text-[#fb2c36]">23°</Text>
                <Text> / </Text>
                <Text className="text-[#2b7fff]">6°</Text>
            </p>
            <svg viewBox="0 0 24 33" className="ml-10 h-[33px] w-[24px]" aria-hidden="true">
                <path d="M12 0c3 8 12 14 12 21a12 12 0 0 1-24 0C0 14 9 8 12 0Z" className="fill-[#bedbff]" />
            </svg>
            <Text className="ml-2">0%</Text>
            <Text className="ml-8 text-[#737373]">경복대로211번길</Text>
        </section>
    );
}

function Summary() {
    return (
        <section className="flex h-[150px] items-center justify-between border-y-3 border-[#dbf1f9] bg-[#f2fafd] px-12 leading-[72px]">
            <p className="flex items-baseline gap-6">
                <Text className="text-[#737373]">총 시간</Text>
                <Text size="xl" className="font-bold text-[#009dda]" latinClassName="font-normal">9시간 48분</Text>
            </p>
            <div className="flex items-center gap-[44px]">
                <p className="flex items-baseline gap-3">
                    <Text className="text-[#737373]">도착</Text>
                    <Text size="xl" className="font-bold text-[#0a0a0a]">오후 07:55</Text>
                </p>
                <span className="h-[39px] w-[3px] bg-[#a3a3a3]" />
                <p className="flex items-baseline gap-3">
                    <Text className="text-[#737373]">완료</Text>
                    <Text size="xl" className="font-bold text-[#0a0a0a]">오후 08:25</Text>
                </p>
            </div>
        </section>
    );
}

function Actions() {
    return (
        <section className="px-12 pt-9">
            <div className="flex justify-center gap-6 pb-9 text-[#0a0a0a]">
                <button type="button" className="flex h-[132px] items-center gap-[27px] rounded-[30px] border-3 border-[#e5e5e5] px-12">
                    <svg viewBox="0 0 48 52" className="h-[52px] w-[48px]" aria-hidden="true">
                        <path d="M24 3C15 3 8 10 8 19c0 10 10 18 16 29 6-11 16-19 16-29C40 10 33 3 24 3Z" className="fill-none stroke-[#ea4335] stroke-4" />
                        <circle cx="24" cy="19" r="6" className="fill-[#4285f4]" />
                    </svg>
                    <Text size="lg">Google Maps</Text>
                </button>
                <button type="button" className="flex h-[132px] items-center gap-[27px] rounded-[30px] border-3 border-[#e5e5e5] px-12">
                    <svg viewBox="0 0 48 52" className="h-[52px] w-[48px]" aria-hidden="true">
                        <path d="M6 8h36a3 3 0 0 1 3 3v34a3 3 0 0 1-3 3H6a3 3 0 0 1-3-3V11a3 3 0 0 1 3-3ZM3 20h42M16 3v12M33 3v12" strokeLinecap="round" className="fill-none stroke-[#4285f4] stroke-4" />
                        <rect x="12" y="26" width="9" height="6" rx="1" className="fill-[#34a853]" />
                        <rect x="28" y="26" width="9" height="6" rx="1" className="fill-[#fbbc04]" />
                        <rect x="12" y="37" width="9" height="6" rx="1" className="fill-[#ea4335]" />
                    </svg>
                    <Text size="lg">Google 캘린더에 추가</Text>
                </button>
            </div>
            <div className="flex justify-center border-t-3 border-[#e5e5e5] pt-6">
                <button type="button" className="flex h-[144px] items-center gap-[27px] rounded-[30px] bg-[#009dda] px-[72px] text-white shadow-[0_3px_9px_rgba(0,0,0,0.15)]">
                    <svg viewBox="0 0 24 24" className="size-[54px] fill-none stroke-current stroke-2" strokeLinecap="round" strokeLinejoin="round" aria-hidden="true">
                        <path d="M15.2 3a2 2 0 0 1 1.4.6l3.8 3.8a2 2 0 0 1 .6 1.4V19a2 2 0 0 1-2 2H5a2 2 0 0 1-2-2V5a2 2 0 0 1 2-2z" />
                        <path d="M17 21v-7a1 1 0 0 0-1-1H8a1 1 0 0 0-1 1v7M7 3v4a1 1 0 0 0 1 1h7" />
                    </svg>
                    <Text size="lg" className="font-medium">경로 저장</Text>
                </button>
            </div>
        </section>
    );
}

function PlateIcon() {
    return (
        <svg viewBox="0 0 40 34" className="h-[34px] w-[40px]" aria-hidden="true">
            <circle cx="20" cy="18" r="15" className="fill-[#e3e5e6] stroke-[#c9cccf] stroke-1" />
            <circle cx="20" cy="18" r="10" className="fill-[#dcdedf] stroke-[#f8fafb] stroke-2" />
            <path d="M1 1v9q0 3 3 3t3-3V1M4 1v32" className="fill-none stroke-[#9ba6b1] stroke-2" />
            <path d="M38 33V1q-4 5-4 17h4" className="fill-[#c6d4e3] stroke-[#9ba6b1] stroke-1" />
        </svg>
    );
}

function Travel({ label }) {
    return (
        <div className="flex items-center pt-9 pb-6 pl-[84px] leading-[48px]">
            <div className="flex h-12 items-center border-l-3 border-[#737373] pl-6">
                <Text className="text-[#737373]">{label}</Text>
                <a href="#map" className="ml-6 text-[#009dda]"><Text size="sm">Map</Text></a>
            </div>
        </div>
    );
}

function Stop({ stop, first }) {
    return (
        <li className="border-b-3 border-[#e5e5e5]">
            {stop.travel && <Travel label={stop.travel} />}
            {stop.name && (
                <div className={clsx('flex gap-9 px-12 pb-[43px]', first && 'pt-9')}>
                    <div className="flex size-[84px] shrink-0 items-center justify-center rounded-full bg-[#009dda] text-white">
                        <Text>{String(stop.id)}</Text>
                    </div>
                    <div>
                        <h2 className="leading-[56px] text-[#0a0a0a]"><Text size="lg">{stop.name}</Text></h2>
                        <p className="mt-[14px] flex items-center leading-[48px] text-[#737373]">
                            <Text>{stop.time}</Text>
                            {stop.stay && (
                                <span className="ml-9 rounded-[12px] bg-[#dff5e8] px-[18px] text-[#0a0a0a] leading-[52px]">
                                    <Text size="sm">{stop.stay}</Text>
                                </span>
                            )}
                        </p>
                        {stop.meal && (
                            <p className="mt-5 flex items-center gap-6 leading-[44px] text-[#ff6900]">
                                <PlateIcon />
                                <Text size="sm" className="font-bold">여기서 식사</Text>
                            </p>
                        )}
                    </div>
                </div>
            )}
        </li>
    );
}

export default function App() {
    return (
        <div className="bg-white">
            <div className="h-[162px] bg-black" />
            <Header />
            <main>
                <RouteMap />
                <WeatherBar />
                <Summary />
                <Actions />
                <ol className="pt-9">
                    {STOPS.map((stop, i) => <Stop key={stop.id} stop={stop} first={i === 0} />)}
                </ol>
            </main>
        </div>
    );
}
